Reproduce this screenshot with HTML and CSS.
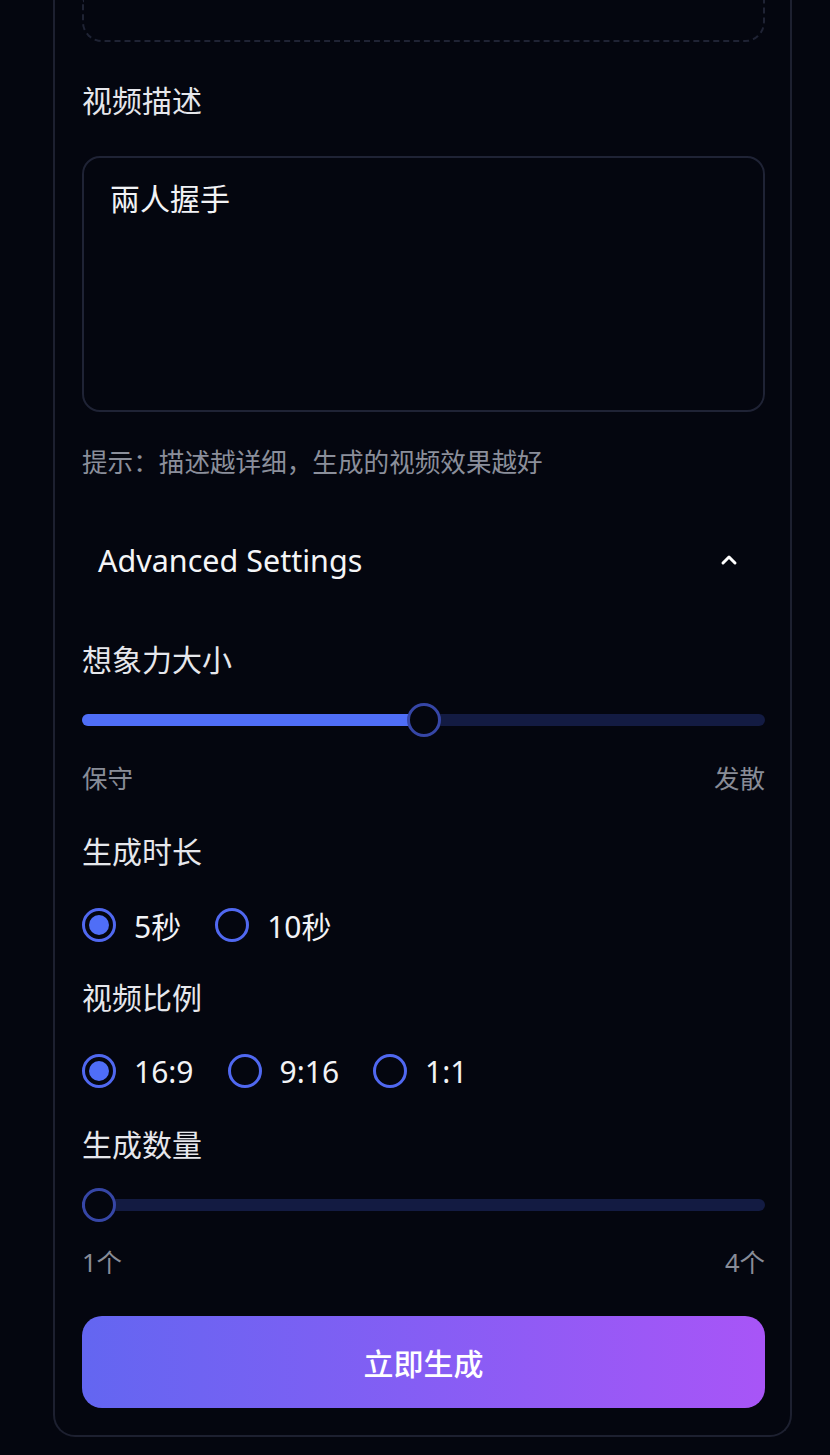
FILE: index.html
```html
<!DOCTYPE html>
<html lang="zh-CN">
<head>
    <meta charset="UTF-8">
    <meta name="viewport" content="width=device-width, initial-scale=1.0">
    <title>视频生成</title>
    <link rel="stylesheet" href="styles.css">
</head>
<body>

    <div class="panel">
        <!-- 上传区域（已滚出视口） -->
        <div class="upload-drop"></div>

        <label class="field-label label-desc" for="prompt">视频描述</label>
        <textarea id="prompt" class="prompt-box">兩人握手</textarea>
        <p class="hint">提示：描述越详细，生成的视频效果越好</p>

        <!-- 高级设置 -->
        <div class="advanced-head">
            <span>Advanced Settings</span>
            <svg class="chevron" width="24" height="24" viewBox="0 0 24 24" fill="none" stroke="#ffffff" stroke-width="3" stroke-linecap="round" stroke-linejoin="round">
                <path d="M6 15l6-6 6 6"/>
            </svg>
        </div>

        <div class="field-label label-gap">想象力大小</div>
        <div class="slider" style="--v: 0.5">
            <div class="slider-track"><div class="slider-fill"></div></div>
            <div class="slider-thumb"></div>
        </div>
        <div class="range-labels">
            <span>保守</span>
            <span>发散</span>
        </div>

        <div class="field-label label-gap2">生成时长</div>
        <div class="radio-row">
            <label class="radio checked"><span class="dot"></span>5秒</label>
            <label class="radio"><span class="dot"></span>10秒</label>
        </div>

        <div class="field-label label-gap3">视频比例</div>
        <div class="radio-row">
            <label class="radio checked"><span class="dot"></span>16:9</label>
            <label class="radio"><span class="dot"></span>9:16</label>
            <label class="radio"><span class="dot"></span>1:1</label>
        </div>

        <div class="field-label label-gap4">生成数量</div>
        <div class="slider" style="--v: 0">
            <div class="slider-track"><div class="slider-fill"></div></div>
            <div class="slider-thumb"></div>
        </div>
        <div class="range-labels count-labels">
            <span>1个</span>
            <span>4个</span>
        </div>

        <button class="generate-btn">立即生成</button>
    </div>

</body>
</html>
```

FILE: styles.css
```css
/* 基础样式 */
body {
    margin: 0;
    background-color: #04060f;
    font-family: "Noto Sans", "Noto Sans CJK SC", sans-serif;
    color: #e8e9ee;
}

.panel {
    width: 739px;
    box-sizing: border-box;
    margin-left: 53px;
    padding: 0 25px 27px 27px;
    border: 2px solid #1d2030;
    border-top: none;
    border-radius: 0 0 22px 22px;
    display: flex;
    flex-direction: column;
}

/* 上传框底部 */
.upload-drop {
    height: 42px;
    box-sizing: border-box;
    border: 2px dashed #1f2334;
    border-top: none;
    border-radius: 0 0 20px 20px;
}

.field-label {
    font-size: 30px;
    line-height: 40px;
    color: #e6e7ec;
}

.label-desc { margin-top: 39px; }
.label-gap { margin-top: 40px; }
.label-gap2 { margin-top: 36px; }
.label-gap3 { margin-top: 33px; }
.label-gap4 { margin-top: 34px; }

/* 描述输入框 */
.prompt-box {
    margin-top: 35px;
    height: 256px;
    box-sizing: border-box;
    padding: 20px 26px;
    background: transparent;
    border: 2px solid #1f2335;
    border-radius: 18px;
    font-family: inherit;
    font-size: 30px;
    line-height: 42px;
    color: #f2f3f6;
    resize: none;
    outline: none;
}

.hint {
    margin: 33px 0 0 0;
    font-size: 25.6px;
    line-height: 36px;
    color: #8b8f9b;
}

/* 高级设置标题 */
.advanced-head {
    margin-top: 39px;
    height: 80px;
    padding: 0 24px 0 16px;
    display: flex;
    align-items: center;
    justify-content: space-between;
    font-size: 30.5px;
    color: #f4f5f7;
}

.chevron {
    width: 24px;
    height: 24px;
}

/* 滑块 */
.slider {
    position: relative;
    margin-top: 20px;
    height: 40px;
    display: flex;
    align-items: center;
}

.slider-track {
    width: 100%;
    height: 12px;
    border-radius: 6px;
    background-color: #131b42;
    overflow: hidden;
}

.slider-fill {
    height: 100%;
    width: calc(17px + var(--v) * (100% - 34px));
    background-color: #4f6ef7;
}

.slider-thumb {
    position: absolute;
    top: 3px;
    left: calc(var(--v) * (100% - 34px));
    width: 34px;
    height: 34px;
    box-sizing: border-box;
    border-radius: 50%;
    border: 3px solid #3646a6;
    background-color: #04060f;
}

.range-labels {
    margin-top: 20px;
    display: flex;
    justify-content: space-between;
    font-size: 25.5px;
    line-height: 36px;
    color: #888c97;
}

.count-labels {
    margin-top: 19px;
}

/* 单选按钮 */
.radio-row {
    margin-top: 33px;
    height: 40px;
    display: flex;
    align-items: center;
    gap: 34px;
}

.radio {
    display: flex;
    align-items: center;
    gap: 18px;
    font-size: 30px;
    color: #f2f3f6;
}

.radio .dot {
    width: 34px;
    height: 34px;
    box-sizing: border-box;
    border-radius: 50%;
    border: 3px solid #5068f0;
    display: flex;
    align-items: center;
    justify-content: center;
}

.radio.checked .dot::after {
    content: "";
    width: 20px;
    height: 20px;
    border-radius: 50%;
    background-color: #4f6ef7;
}

/* 生成按钮 */
.generate-btn {
    margin-top: 36px;
    height: 92px;
    border: none;
    border-radius: 20px;
    background: linear-gradient(90deg, #6366f1, #a855f7);
    color: #ffffff;
    font-family: inherit;
    font-size: 30px;
    font-weight: 500;
    cursor: pointer;
}
```
